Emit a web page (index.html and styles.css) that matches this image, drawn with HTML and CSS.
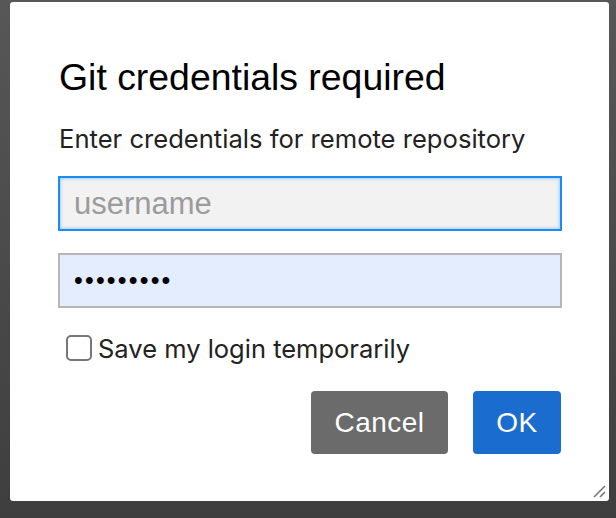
FILE: index.html
```html
<!DOCTYPE html>
<html>
<head>
<meta charset="utf-8">
<link rel="stylesheet" href="styles.css">
</head>
<body>
<div class="dialog">
  <h1 class="title">Git credentials required</h1>
  <p class="subtitle">Enter credentials for remote repository</p>
  <input class="field field-user" type="text" placeholder="username">
  <input class="field field-pass" type="password" value="secretpwd">
  <label class="check-row"><span class="checkbox"></span><span class="check-label">Save my login temporarily</span></label>
  <div class="actions">
    <button class="btn btn-cancel">Cancel</button>
    <button class="btn btn-ok">OK</button>
  </div>
  <svg class="grip" width="14" height="14" viewBox="0 0 14 14"><path d="M13 2 L2 13 M13 8 L8 13" stroke="#777" stroke-width="1.6" fill="none"/></svg>
</div>
</body>
</html>
```
FILE: styles.css
```css
html, body { margin: 0; padding: 0; }
body {
  width: 616px; height: 518px; overflow: hidden;
  background: linear-gradient(180deg, #575757 0%, #484848 60%, #3e3e3e 100%);
  padding-top: 2px; padding-left: 10px; box-sizing: border-box;
}
.dialog {
  position: relative;
  width: 599px; height: 499px; box-sizing: border-box;
  background: #fff; border-radius: 3px;
  padding: 53px 47px 0 48px;
  display: flex; flex-direction: column;
}
.title {
  margin: 0; font-family: "Liberation Sans", Arial, sans-serif;
  font-weight: normal; font-size: 37.4px; line-height: 44px; color: #000;
  padding-left: 1px;
}
.subtitle {
  margin: 24px 0 0 1px; font-family: Inter, "Liberation Sans", sans-serif;
  font-size: 25.6px; line-height: 32px; color: #222;
}
.field {
  display: block; box-sizing: border-box; width: 504px; height: 55px;
  margin: 0; padding: 0 14px; font-family: "Liberation Sans", Arial, sans-serif;
  font-size: 31px; outline: none;
}
.field-user {
  margin-top: 21px; background: #f2f2f2; border: 2px solid #1c8cf0;
  box-shadow: inset 0 0 3px 1px rgba(28,140,240,0.35);
}
.field-user::placeholder { color: #9b9b9b; }
.field-pass {
  margin-top: 22px; background: #e3edfd; border: 2px solid #b5b5b5;
  color: #000; font-size: 25px; letter-spacing: 2.2px;
}
.check-row {
  display: flex; align-items: center; margin: 26px 0 0 8px; height: 28px;
}
.checkbox {
  width: 22px; height: 22px; border: 2px solid #777; border-radius: 5px;
  background: #fff;
}
.check-label {
  margin-left: 6px; font-family: Inter, "Liberation Sans", sans-serif;
  font-size: 25.5px; color: #222;
}
.actions {
  display: flex; justify-content: flex-end; gap: 25px; margin-top: 29px;
  padding-right: 1px;
}
.btn {
  height: 63px; border: none; border-radius: 4px; color: #fff;
  font-family: "Liberation Sans", Arial, sans-serif; font-size: 28px;
  letter-spacing: 0.5px; padding: 0;
}
.btn-cancel { width: 137px; background: #6b6b6b; }
.btn-ok { width: 88px; background: #1a6ccf; }
.grip { position: absolute; right: 3px; bottom: 3px; }
```
